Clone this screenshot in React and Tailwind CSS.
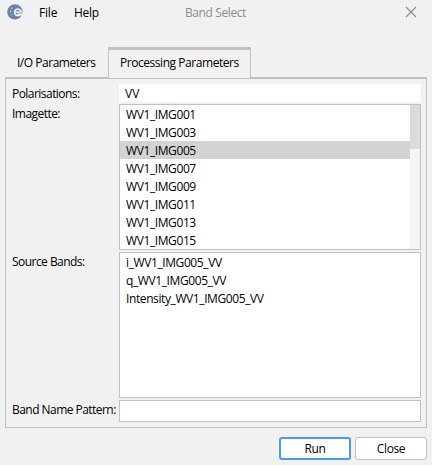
import React from "react";

const imagettes = ["WV1_IMG001", "WV1_IMG003", "WV1_IMG005", "WV1_IMG007", "WV1_IMG009", "WV1_IMG011", "WV1_IMG013", "WV1_IMG015"];
const bands = ["i_WV1_IMG005_VV", "q_WV1_IMG005_VV", "Intensity_WV1_IMG005_VV"];

function Logo() {
  return (
    <svg width="16" height="16" viewBox="0 0 16 16" className="block">
      <circle cx="7.9" cy="7.9" r="7.7" fill="#6d83ab" />
      <path d="M16 9.4H9.6Q11 12 14.6 11.4L16 13Z" fill="#f1f1f1" />
      <path d="M8.6 8h5.6a3.3 3.3 0 1 0-1.2 2.9" fill="none" stroke="#f1f1f1" strokeWidth="1.6" />
      <circle cx="5" cy="4.2" r=".8" fill="#c5cede" />
      <circle cx="3.6" cy="7.4" r=".8" fill="#c5cede" />
      <circle cx="4.8" cy="10.8" r=".6" fill="#a9b6cd" />
    </svg>
  );
}

function Label({ className = "", children }) {
  return <span className={"pl-[6px] leading-[18px] tracking-[-0.54px] " + className}>{children}</span>;
}

export default function App() {
  return (
    <div className="flex h-[465px] w-[432px] flex-col overflow-hidden bg-[#f1f1f1] font-['Open_Sans',sans-serif] text-[12px] leading-[18px] tracking-[-0.4px] whitespace-nowrap text-black">
      <header className="flex h-[47px] items-start pl-[7px]">
        <div className="mt-1 w-4"><Logo /></div>
        <span className="mt-1 ml-4 w-[35px] tracking-[-0.2px]">File</span>
        <span className="mt-1 w-[111px] tracking-[-0.3px]">Help</span>
        <span className="mt-1 w-[220px] text-[#8c8c8c]">Band Select</span>
        <svg width="12" height="12" viewBox="0 0 12 12" className="mt-[6px]">
          <path d="M1 1l10 10M11 1L1 11" stroke="#8c8c8c" strokeWidth="1.1" />
        </svg>
      </header>

      <nav className="flex h-[30px] items-stretch pl-[5px]">
        <div className="w-[103px] pt-[7px] pl-3 tracking-[-0.48px]">I/O Parameters</div>
        <div className="relative -mb-px h-[31px] w-[143px] border-x border-t-[3px] border-[#c1c1c1] bg-[#f1f1f1] pt-1 pl-[11px] tracking-[-0.45px]">Processing Parameters</div>
      </nav>

      <main className="flex h-[351px] w-[422px] flex-col">
        <div className="ml-[5px] flex h-[351px] w-[422px] shrink-0 border border-t-2 border-[#c1c1c1] pt-[5px]">
          <div className="flex w-[113px] flex-col pt-px">
            <Label className="h-[20px]">Polarisations:</Label>
            <Label className="h-[148px]">Imagette:</Label>
            <Label className="h-[148px]">Source Bands:</Label>
            <Label>Band Name Pattern:</Label>
          </div>
          <div className="flex w-[302px] flex-col gap-[2px]">
            <div className="h-[18px] bg-white pt-px pl-[6px] tracking-[0px]">VV</div>
            <div className="flex h-[146px] border border-[#c1c1c1] bg-white">
              <div className="w-[290px]">
                {imagettes.map((n) => (
                  <div key={n} className={n === "WV1_IMG005" ? "h-[18px] bg-[#d3d3d3] pt-px pl-[6px]" : "h-[18px] pt-px pl-[6px]"}>{n}</div>
                ))}
              </div>
              <div className="w-[10px] bg-[#f5f5f5]"><div className="h-[44px] bg-[#dbdbdb]" /></div>
            </div>
            <div className="h-[146px] border border-[#c1c1c1] bg-white">
              {bands.map((n) => <div key={n} className="h-[18px] pt-px pl-[6px]">{n}</div>)}
            </div>
            <div className="h-[22px] border border-[#c1c1c1] bg-white" />
          </div>
        </div>
      </main>

      <footer className="mt-[9px] flex justify-end gap-1 pr-[5px]">
        <button className="h-[23px] w-[72px] rounded-[3px] border-2 border-[#4c9be8] bg-white pt-px">Run</button>
        <button className="h-[23px] w-[72px] rounded-[3px] border border-[#c1c1c1] bg-white pt-px">Close</button>
      </footer>
    </div>
  );
}
